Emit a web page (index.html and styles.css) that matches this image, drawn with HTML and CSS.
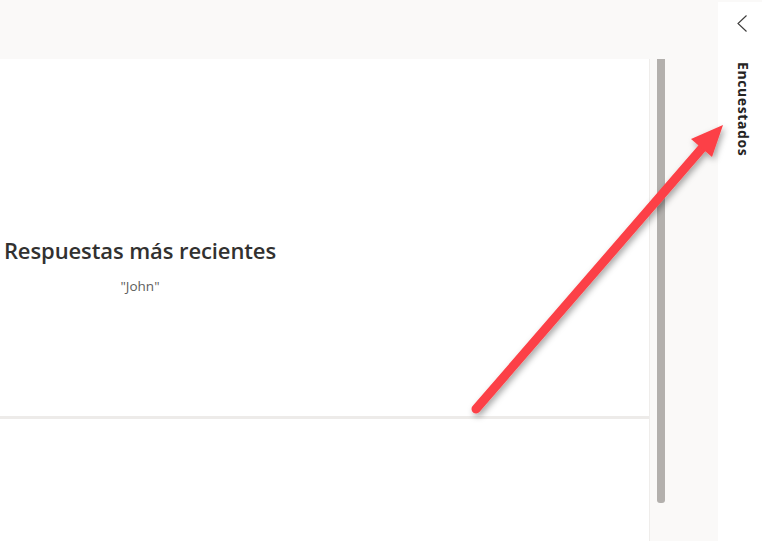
FILE: index.html
```html
<!DOCTYPE html>
<html lang="es">
<head>
<meta charset="utf-8">
<title>Respuestas</title>
<link rel="stylesheet" href="styles.css">
</head>
<body>
<div class="app">
  <div class="workspace">
    <div class="topband"></div>
    <div class="content-row">
      <div class="card">
        <div class="summary">
          <h2 class="summary-title">Respuestas más recientes</h2>
          <p class="summary-value">"John"</p>
        </div>
        <div class="divider"></div>
      </div>
      <div class="gutter">
        <div class="scrollbar"></div>
      </div>
    </div>
  </div>
  <aside class="sidepanel">
    <button class="collapse-btn" aria-label="Contraer">
      <svg width="12" height="18" viewBox="0 0 12 18"><polyline points="10.5,1.5 2,9.5 10.5,17.5" fill="none" stroke="#3b3a39" stroke-width="1.1"/></svg>
    </button>
    <div class="side-label">Encuestados</div>
  </aside>
</div>
<svg class="annotation" width="762" height="551" viewBox="0 0 762 551">
  <defs>
    <filter id="shadow" x="-20%" y="-20%" width="140%" height="140%">
      <feDropShadow dx="2" dy="3" stdDeviation="3" flood-color="#000" flood-opacity="0.35"/>
    </filter>
  </defs>
  <g filter="url(#shadow)">
    <line x1="476" y1="409" x2="703" y2="147" stroke="#fc4146" stroke-width="9" stroke-linecap="round"/>
    <polygon points="723,125 691,139 712,157" fill="#fc4146"/>
  </g>
</svg>
</body>
</html>
```
FILE: styles.css
```css
* { box-sizing: border-box; }
html, body { margin: 0; padding: 0; }
body {
  width: 762px;
  height: 551px;
  overflow: hidden;
  background: #ffffff;
  font-family: "Open Sans", "Segoe UI", "Liberation Sans", sans-serif;
  position: relative;
}
.app {
  display: flex;
  height: 551px;
}
.workspace {
  width: 718px;
  height: 541px;
  display: flex;
  flex-direction: column;
  background: #faf9f8;
}
.topband { height: 59px; flex: none; }
.content-row {
  flex: 1;
  display: flex;
}
.card {
  width: 649px;
  background: #ffffff;
  display: flex;
  flex-direction: column;
}
.summary {
  width: 280px;
  margin-top: 176px;
  text-align: center;
}
.summary-title {
  margin: 0;
  font-size: 22px;
  font-weight: 600;
  color: #323130;
  line-height: 30px;
  letter-spacing: -0.1px;
}
.summary-value {
  margin: 12px 0 0;
  font-size: 13.5px;
  color: #605e5c;
  line-height: 18px;
}
.divider {
  margin-top: 121px;
  height: 3px;
  background: #edebe9;
}
.gutter {
  flex: 1;
  box-shadow: inset 1px 0 0 #efedeb;
  padding-left: 8px;
}
.scrollbar {
  width: 8px;
  height: 444px;
  background: #b3b0ad;
  border-radius: 0 0 3px 3px;
}
.sidepanel {
  width: 44px;
  background: #ffffff;
  border-top: 2px solid #faf9f8;
  display: flex;
  flex-direction: column;
  align-items: flex-start;
  padding-left: 18px;
}
.collapse-btn {
  border: 0;
  background: none;
  padding: 0;
  margin-top: 12px;
  width: 12px;
  height: 18px;
  display: block;
}
.collapse-btn svg { display: block; }
.side-label {
  margin-top: 30px;
  writing-mode: vertical-rl;
  font-size: 14px;
  font-weight: 700;
  color: #252423;
  letter-spacing: 0.6px;
  line-height: 14px;
}
.annotation {
  position: absolute;
  left: 0;
  top: 0;
  pointer-events: none;
}
```
